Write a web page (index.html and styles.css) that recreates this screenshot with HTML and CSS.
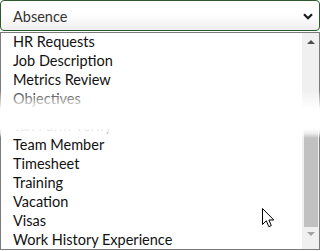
FILE: index.html
```html
<!DOCTYPE html>
<html>
<head>
<meta charset="utf-8">
<link rel="stylesheet" href="styles.css">
</head>
<body>
<div class="page">
  <div class="select">
    <span class="select-value">Absence</span>
    <svg class="chevron" width="10" height="7" viewBox="0 0 10 7"><path d="M1 1.2 L5 5.2 L9 1.2" fill="none" stroke="#1a1a1a" stroke-width="2.2"/></svg>
  </div>
  <div class="list">
    <div class="options">
      <div class="opt">HR Requests</div>
      <div class="opt">Job Description</div>
      <div class="opt">Metrics Review</div>
      <div class="opt">Objectives</div>
      <div class="gap"></div>
      <div class="opt">Tax Form Verify</div>
      <div class="opt">Team Member</div>
      <div class="opt">Timesheet</div>
      <div class="opt">Training</div>
      <div class="opt">Vacation</div>
      <div class="opt">Visas</div>
      <div class="opt">Work History Experience</div>
    </div>
    <div class="scrollbar">
      <div class="sb-btn"><span class="arrow-up"></span></div>
      <div class="sb-track"><div class="sb-thumb"></div></div>
      <div class="sb-btn sb-btn-down"><span class="arrow-down"></span></div>
    </div>
  </div>
  <div class="fade"></div>
  <svg class="cursor" width="13" height="20" viewBox="0 0 13 20"><path d="M0.5 0.5 L0.5 16.5 L4.3 12.8 L6.8 18.7 L9.3 17.6 L6.9 12 L11.8 12 Z" fill="#fff" stroke="#000" stroke-width="1" stroke-linejoin="miter"/></svg>
</div>
</body>
</html>
```
FILE: styles.css
```css
html, body { margin: 0; padding: 0; background: #fff; }
.page {
  position: relative;
  width: 320px;
  height: 251px;
  overflow: hidden;
  font-family: Lato, "Open Sans", sans-serif;
  font-size: 14.5px;
}
.select {
  box-sizing: border-box;
  height: 31px;
  border: 1px solid #2c5a2c;
  border-radius: 4px;
  background: linear-gradient(to bottom, #ffffff 0%, #ffffff 45%, #eeeeee 100%);
  display: flex;
  align-items: center;
  padding: 0 6px 0 12px;
}
.select-value { flex: 1; color: #333; padding-top: 1px; }
.chevron { display: block; margin-top: 2px; }
.list {
  box-sizing: border-box;
  margin-top: 1px;
  height: 218px;
  border: 1px solid #7b7b7b;
  display: flex;
  overflow: hidden;
}
.options { flex: 1; overflow: hidden; margin-top: -1px; }
.opt {
  height: 19px;
  line-height: 19px;
  padding-left: 12px;
  color: #111;
  white-space: nowrap;
}
.gap { height: 8px; }
.scrollbar {
  width: 17px;
  background: #f0f0f0;
  display: flex;
  flex-direction: column;
}
.sb-btn {
  height: 17px;
  display: flex;
  justify-content: center;
  align-items: center;
}
.sb-btn-down { height: 22px; align-items: flex-start; padding-top: 5px; box-sizing: border-box; }
.arrow-up {
  width: 0; height: 0;
  border-left: 4px solid transparent;
  border-right: 4px solid transparent;
  border-bottom: 4px solid #505050;
}
.arrow-down {
  width: 0; height: 0;
  border-left: 4px solid transparent;
  border-right: 4px solid transparent;
  border-top: 4px solid #a3a3a3;
}
.sb-track { flex: 1; display: flex; flex-direction: column; justify-content: flex-end; padding: 0 1px 0 2px; }
.sb-thumb { height: 106px; background: #c1c1c1; }
.fade {
  position: absolute;
  left: 0; right: 0;
  top: 90px;
  height: 48px;
  background: linear-gradient(to bottom,
    rgba(255,255,255,0) 0%,
    rgba(255,255,255,0.35) 12%,
    rgba(255,255,255,0.65) 25%,
    #fff 40%,
    #fff 80%,
    rgba(255,255,255,0.75) 90%,
    rgba(255,255,255,0) 100%);
}
.cursor { position: absolute; left: 262px; top: 208px; }
```
